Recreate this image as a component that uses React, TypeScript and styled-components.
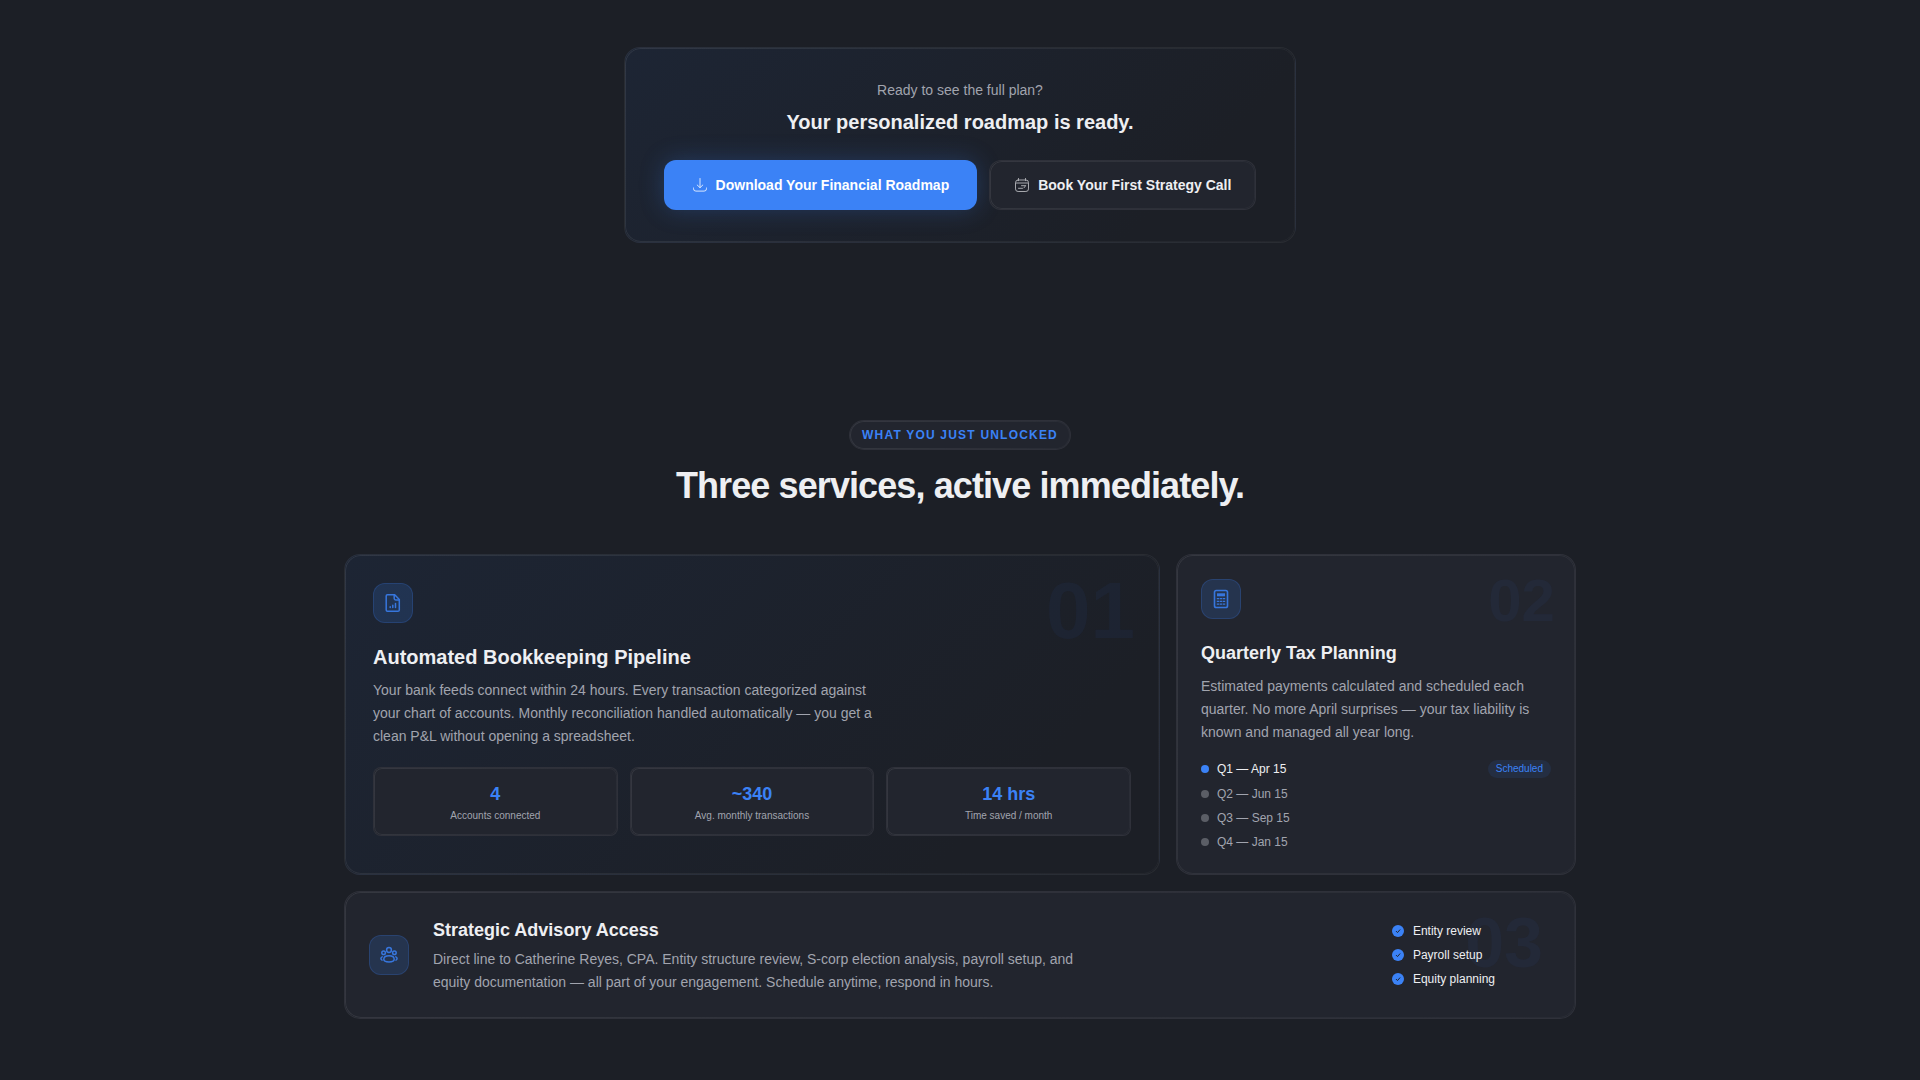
import React from "react";
import styled, { createGlobalStyle, css } from "styled-components";

const color = {
  page: "#1c1f26",
  card: "#22252e",
  text: "#eeeff2",
  muted: "#a1a4ae",
  blue: "#3b82f6",
  dot: "#5b5e66",
};

const GlobalStyle = createGlobalStyle`
  *, *::before, *::after { box-sizing: border-box; }
  body {
    margin: 0;
    background: ${color.page};
    color: ${color.text};
    font-family: "Liberation Sans", Arial, sans-serif;
  }
  h1, h2, h3, p, ul { margin: 0; padding: 0; }
  ul { list-style: none; }
`;

/* A hairline border with a second, diagonal highlight just inside it. */
const bevel = css`
  position: relative;
  border: 1px solid rgba(255, 255, 255, 0.06);
  &::before {
    content: "";
    position: absolute;
    inset: 0;
    border-radius: inherit;
    padding: 1px;
    background: linear-gradient(135deg, rgba(255, 255, 255, 0.09), rgba(255, 255, 255, 0.03));
    mask: linear-gradient(#000 0 0) content-box exclude, linear-gradient(#000 0 0);
    pointer-events: none;
  }
`;

const Page = styled.main`
  display: flex;
  flex-direction: column;
  min-height: 100vh;
`;

const CtaSection = styled.section`
  padding: 47px 24px 81px;
`;

const CtaCard = styled.div`
  ${bevel}
  max-width: 672px;
  margin: 0 auto;
  padding: 32px;
  border-radius: 16px;
  background: linear-gradient(135deg, #1d2534 0%, ${color.page} 80%);
  text-align: center;
`;

const CtaLead = styled.p`
  margin-bottom: 8px;
  font-size: 14px;
  line-height: 20px;
  color: ${color.muted};
`;

const CtaTitle = styled.h2`
  margin-bottom: 24px;
  font-size: 20px;
  line-height: 28px;
`;

const Actions = styled.div`
  display: flex;
  flex-wrap: wrap;
  justify-content: center;
  gap: 12px;
`;

const Button = styled.button`
  display: inline-flex;
  align-items: center;
  gap: 8px;
  height: 50px;
  padding: 0 24px;
  border-radius: 12px;
  font: bold 14px/20px "Liberation Sans", Arial, sans-serif;
  color: ${color.text};
  cursor: pointer;
  svg { opacity: 0.65; }
`;

const PrimaryButton = styled(Button)`
  padding: 0 28px;
  border: 0;
  background: ${color.blue};
  color: #fff;
  box-shadow: 0 0 24px rgba(59, 130, 246, 0.25);
  svg { opacity: 0.8; }
`;

const SecondaryButton = styled(Button)`
  ${bevel}
  background: ${color.card};
`;

const Services = styled.section`
  width: 100%;
  max-width: 1280px;
  margin: 0 auto;
  padding: 96px 24px 61px;
`;

const SectionHead = styled.header`
  display: flex;
  flex-direction: column;
  align-items: center;
  gap: 16px;
  margin-bottom: 48px;
`;

const Pill = styled.p`
  ${bevel}
  padding: 6px 12px;
  border-radius: 15px;
  background: ${color.card};
  font-size: 12px;
  font-weight: bold;
  line-height: 16px;
  letter-spacing: 0.1em;
  text-transform: uppercase;
  color: ${color.blue};
`;

const SectionTitle = styled.h1`
  font-size: 36px;
  line-height: 40px;
  letter-spacing: -0.025em;
  text-align: center;
`;

const Grid = styled.div`
  display: grid;
  grid-template-columns: repeat(3, minmax(0, 1fr));
  gap: 16px;
`;

const Card = styled.article<{ $span?: number }>`
  ${bevel}
  grid-column: span ${(p) => p.$span ?? 1};
  padding: 24px;
  border-radius: 16px;
  background: ${color.card};
`;

const FeatureCard = styled(Card)`
  padding: 28px;
  background: linear-gradient(135deg, #1d2534 0%, ${color.page} 80%);
`;

const WideCard = styled(Card)`
  display: flex;
  align-items: center;
  gap: 24px;
  padding-right: 80px;
`;

const Numeral = styled.span<{ $size: number; $right: number }>`
  position: absolute;
  top: 16px;
  right: ${(p) => p.$right}px;
  font-size: ${(p) => p.$size}px;
  font-weight: bold;
  line-height: 1;
  color: rgba(59, 110, 246, 0.05);
  pointer-events: none;
`;

const IconTile = styled.div`
  display: grid;
  place-items: center;
  flex: none;
  width: 40px;
  height: 40px;
  border: 1px solid rgba(59, 130, 246, 0.2);
  border-radius: 12px;
  background: rgba(59, 130, 246, 0.16);
  color: ${color.blue};
  svg { opacity: 0.85; }
`;

const CardTitle = styled.h3<{ $large?: boolean }>`
  font-size: ${(p) => (p.$large ? 20 : 18)}px;
  line-height: 28px;
  ${IconTile} + & { margin-top: 20px; }
`;

const Copy = styled.p<{ $gap?: number; $max?: number }>`
  margin-top: ${(p) => p.$gap ?? 8}px;
  max-width: ${(p) => (p.$max ? `${p.$max}px` : "none")};
  font-size: 14px;
  line-height: 23px;
  color: ${color.muted};
`;

const Stats = styled.div`
  display: grid;
  grid-template-columns: repeat(3, minmax(0, 1fr));
  gap: 12px;
  margin-top: 19px;
`;

const Stat = styled.div`
  ${bevel}
  padding: 12px;
  border-radius: 8px;
  background: ${color.card};
  text-align: center;
`;

const StatValue = styled.p`
  font-size: 18px;
  font-weight: bold;
  line-height: 28px;
  color: ${color.blue};
`;

const StatLabel = styled.p`
  font-size: 10px;
  line-height: 15px;
  color: ${color.muted};
`;

const List = styled.ul`
  display: flex;
  flex-direction: column;
  gap: 8px;
  font-size: 12px;
  line-height: 16px;
`;

const Quarters = styled(List)`
  margin-top: 16px;
`;

const Row = styled.li<{ $dim?: boolean }>`
  display: flex;
  align-items: center;
  gap: 8px;
  color: ${(p) => (p.$dim ? color.muted : color.text)};
`;

const Dot = styled.span<{ $on?: boolean }>`
  width: 8px;
  height: 8px;
  border-radius: 50%;
  background: ${(p) => (p.$on ? color.blue : color.dot)};
`;

const Badge = styled.span`
  margin-left: auto;
  padding: 2px 8px;
  border-radius: 9px;
  background: rgba(59, 130, 246, 0.1);
  font-size: 10px;
  line-height: 14px;
  color: ${color.blue};
`;

const WideBody = styled.div`
  flex: 1;
`;

const Perks = styled(List)`
  position: relative;
`;

const DownloadIcon = () => (
  <svg width="16" height="16" viewBox="0 0 16 16" fill="none" stroke="currentColor" strokeLinecap="round" strokeLinejoin="round" aria-hidden>
    <path d="M8 1.500v9M5.200 8l2.800 2.700L10.800 8" />
    <path d="M1.500 11v.7a2.400 2.400 0 0 0 2.400 2.400h8.200a2.400 2.400 0 0 0 2.400-2.400V11" />
  </svg>
);

const CalendarIcon = () => (
  <svg width="16" height="16" viewBox="0 0 16 16" fill="none" stroke="currentColor" strokeLinecap="round" strokeLinejoin="round" aria-hidden>
    <rect x="1.500" y="3" width="13" height="11.500" rx="2.600" />
    <path d="M4.500 1.500v2.200M11.500 1.500v2.200M2 6h12" />
    <path d="M7.500 8.700h4M4.500 11.300h4M10 10.800l1.500-2" />
  </svg>
);

const ReportIcon = () => (
  <svg width="20" height="20" viewBox="0 0 20 20" fill="none" stroke="currentColor" strokeWidth="1.5" strokeLinecap="round" strokeLinejoin="round" aria-hidden>
    <path d="M4.400 1.700h7.300l4.600 4.800v10.400a1.400 1.400 0 0 1-1.400 1.400H4.400a1.200 1.200 0 0 1-1.200-1.200V2.900a1.200 1.200 0 0 1 1.200-1.200z" />
    <path d="M11.200 2v3.600a1.400 1.400 0 0 0 1.400 1.400h3.400" />
    <path d="M7.200 14.600v-.8M9.800 14.600v-2.400M12.500 14.600v-4" />
  </svg>
);

const CalculatorIcon = () => (
  <svg width="20" height="20" viewBox="0 0 20 20" fill="none" stroke="currentColor" strokeWidth="1.600" aria-hidden>
    <rect x="3.500" y="1.500" width="13" height="17" rx="1.800" />
    <rect x="6" y="4.300" width="8" height="3" fill="currentColor" stroke="none" />
    <path d="M5.800 9.700h8.400M5.800 12.400h8.400M5.800 15.200h8.400" strokeWidth="1.200" strokeDasharray="2.400 0.600" />
  </svg>
);

const TeamIcon = () => (
  <svg width="20" height="20" viewBox="0 0 20 20" fill="none" stroke="currentColor" strokeWidth="1.500" strokeLinecap="round" strokeLinejoin="round" aria-hidden>
    <circle cx="10" cy="5" r="2.400" />
    <circle cx="4.600" cy="7.700" r="1.800" />
    <circle cx="15.400" cy="7.700" r="1.800" />
    <path d="M4.800 14.300c0-2.200 2.200-3.600 5.200-3.600s5.200 1.400 5.200 3.600c0 1.800-2.300 2.700-5.200 2.700s-5.200-.9-5.200-2.700z" />
    <path d="M3.200 11.900c-.9.4-1.300 1-1.300 1.700s.4 1.200 1.100 1.500M16.800 11.900c.9.4 1.300 1 1.300 1.700s-.4 1.200-1.100 1.500" />
  </svg>
);

const CheckIcon = () => (
  <svg width="14" height="14" viewBox="0 0 14 14" fill="none" aria-hidden>
    <circle cx="7" cy="7" r="6" fill={color.blue} />
    <path d="M5.200 7.300l1.300 1.300L8.900 5.800" stroke={color.card} strokeWidth="1" strokeLinecap="round" strokeLinejoin="round" />
  </svg>
);

const stats = [
  { value: "4", label: "Accounts connected" },
  { value: "~340", label: "Avg. monthly transactions" },
  { value: "14 hrs", label: "Time saved / month" },
];

const quarters = [
  { label: "Q1 — Apr 15", scheduled: true },
  { label: "Q2 — Jun 15", scheduled: false },
  { label: "Q3 — Sep 15", scheduled: false },
  { label: "Q4 — Jan 15", scheduled: false },
];

const perks = ["Entity review", "Payroll setup", "Equity planning"];

export default function App() {
  return (
    <Page>
      <GlobalStyle />
      <CtaSection>
        <CtaCard>
          <CtaLead>Ready to see the full plan?</CtaLead>
          <CtaTitle>Your personalized roadmap is ready.</CtaTitle>
          <Actions>
            <PrimaryButton type="button">
              <DownloadIcon />
              Download Your Financial Roadmap
            </PrimaryButton>
            <SecondaryButton type="button">
              <CalendarIcon />
              Book Your First Strategy Call
            </SecondaryButton>
          </Actions>
        </CtaCard>
      </CtaSection>

      <Services>
        <SectionHead>
          <Pill>What you just unlocked</Pill>
          <SectionTitle>Three services, active immediately.</SectionTitle>
        </SectionHead>

        <Grid>
          <FeatureCard $span={2}>
            <Numeral $size={80} $right={24}>01</Numeral>
            <IconTile><ReportIcon /></IconTile>
            <CardTitle $large>Automated Bookkeeping Pipeline</CardTitle>
            <Copy $max={512}>
              Your bank feeds connect within 24 hours. Every transaction categorized against your chart
              of accounts. Monthly reconciliation handled automatically — you get a clean P&amp;L without
              opening a spreadsheet.
            </Copy>
            <Stats>
              {stats.map((s) => (
                <Stat key={s.label}>
                  <StatValue>{s.value}</StatValue>
                  <StatLabel>{s.label}</StatLabel>
                </Stat>
              ))}
            </Stats>
          </FeatureCard>

          <Card>
            <Numeral $size={60} $right={20}>02</Numeral>
            <IconTile><CalculatorIcon /></IconTile>
            <CardTitle>Quarterly Tax Planning</CardTitle>
            <Copy>
              Estimated payments calculated and scheduled each quarter. No more April surprises — your
              tax liability is known and managed all year long.
            </Copy>
            <Quarters>
              {quarters.map((q) => (
                <Row key={q.label} $dim={!q.scheduled}>
                  <Dot $on={q.scheduled} />
                  {q.label}
                  {q.scheduled && <Badge>Scheduled</Badge>}
                </Row>
              ))}
            </Quarters>
          </Card>

          <WideCard $span={3}>
            <Numeral $size={70} $right={32}>03</Numeral>
            <IconTile><TeamIcon /></IconTile>
            <WideBody>
              <CardTitle>Strategic Advisory Access</CardTitle>
              <Copy $gap={4} $max={672}>
                Direct line to Catherine Reyes, CPA. Entity structure review, S-corp election analysis,
                payroll setup, and equity documentation — all part of your engagement. Schedule anytime,
                respond in hours.
              </Copy>
            </WideBody>
            <Perks>
              {perks.map((p) => (
                <Row key={p}>
                  <CheckIcon />
                  {p}
                </Row>
              ))}
            </Perks>
          </WideCard>
        </Grid>
      </Services>
    </Page>
  );
}
